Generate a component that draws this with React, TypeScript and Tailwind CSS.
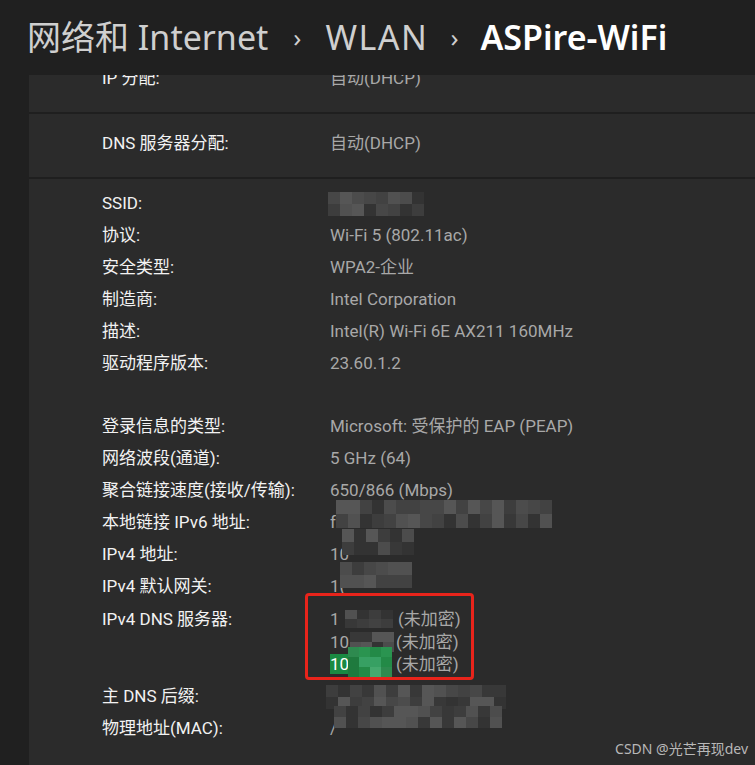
import React from "react";

const FONT = "font-['Noto_Sans','Noto_Sans_CJK_SC',sans-serif]";
const BODY = "font-['Roboto','Noto_Sans_CJK_SC',sans-serif]";

function rnd(seed: number) {
  const x = Math.sin(seed * 12.9898 + 78.233) * 43758.5453;
  return x - Math.floor(x);
}

const GREYS = ["#333333", "#383838", "#3d3d3d", "#424242", "#474747", "#4c4c4c", "#515151", "#565656"];
const GREENS = ["#1f7a3e", "#238a47", "#2a9450", "#37a063", "#45a96e", "#2e8a4f"];

function Mosaic({
  x,
  y,
  cols,
  rows,
  bw = 12,
  bh = 12,
  seed = 1,
  green = false,
}: {
  x: number;
  y: number;
  cols: number;
  rows: number;
  bw?: number;
  bh?: number;
  seed?: number;
  green?: boolean;
}) {
  const pal = green ? GREENS : GREYS;
  const cells = [];
  for (let r = 0; r < rows; r++) {
    for (let c = 0; c < cols; c++) {
      const v = rnd(seed * 100 + r * 17 + c);
      cells.push(
        <div
          key={`${r}-${c}`}
          style={{ width: bw, height: bh, background: pal[Math.floor(v * pal.length)] }}
        />
      );
    }
  }
  return (
    <div
      className="absolute flex flex-wrap"
      style={{ left: x, top: y, width: cols * bw, height: rows * bh }}
    >
      {cells}
    </div>
  );
}

function Row({ label, value, children }: { label: string; value?: string; children?: React.ReactNode }) {
  return (
    <div className="flex h-[32px] items-center">
      <div className="w-[228px] shrink-0 text-[#f2f2f2]">{label}</div>
      <div className="relative flex-1 text-[#a8a8a8]">
        {value}
        {children}
      </div>
    </div>
  );
}

export default function App() {
  return (
    <div className={`relative w-[755px] h-[765px] overflow-hidden bg-[#202020] ${FONT}`}>
      {/* Header breadcrumb */}
      <div className="h-[75px] flex items-center pl-[27px] text-[34px] leading-none pb-[2px]">
        <span className="text-[#cfcfcf]">网络和 Internet</span>
        <span className="text-[#cfcfcf] text-[26px] ml-[25px] mr-[24px]">›</span>
        <span className="text-[#cfcfcf] tracking-[1.5px]">WLAN</span>
        <span className="text-[#cfcfcf] text-[26px] ml-[22px] mr-[22px]">›</span>
        <span className="text-white font-semibold">ASPire-WiFi</span>
      </div>

      {/* Panel */}
      <div className={`ml-[29px] h-[690px] bg-[#2b2b2b] overflow-hidden text-[17px] ${BODY}`}>
        <div className="-mt-[29px]">
          <div className="flex h-[66px] items-center pl-[73px]">
            <div className="w-[228px] text-[#f2f2f2]">IP 分配:</div>
            <div className="text-[#a8a8a8]">自动(DHCP)</div>
          </div>
          <div className="h-[2px] bg-[#1f1f1f]" />
          <div className="flex h-[63px] items-center pl-[73px] pb-[4px]">
            <div className="w-[228px] text-[#f2f2f2]">DNS 服务器分配:</div>
            <div className="text-[#a8a8a8]">自动(DHCP)</div>
          </div>
          <div className="h-[2px] bg-[#1f1f1f]" />

          <div className="pl-[73px] pt-[9px]">
            <Row label="SSID:">
              <Mosaic x={-2} y={-12} cols={8} rows={2} bw={12} bh={12} seed={3} />
            </Row>
            <Row label="协议:" value="Wi-Fi 5 (802.11ac)" />
            <Row label="安全类型:" value="WPA2-企业" />
            <Row label="制造商:" value="Intel Corporation" />
            <Row label="描述:" value="Intel(R) Wi-Fi 6E AX211 160MHz" />
            <Row label="驱动程序版本:" value="23.60.1.2" />
            <div className="h-[31px]" />
            <Row label="登录信息的类型:" value="Microsoft: 受保护的 EAP (PEAP)" />
            <Row label="网络波段(通道):" value="5 GHz (64)" />
            <Row label="聚合链接速度(接收/传输):" value="650/866 (Mbps)" />
            <Row label="本地链接 IPv6 地址:" value="f">
              <Mosaic x={6} y={-10} cols={18} rows={2} bw={12} bh={14} seed={7} />
            </Row>
            <Row label="IPv4 地址:" value="10">
              <Mosaic x={12} y={-13} cols={6} rows={2} bw={12} bh={13} seed={11} />
            </Row>
            <Row label="IPv4 默认网关:" value="1(">
              <Mosaic x={10} y={-12} cols={6} rows={2} bw={12} bh={13} seed={13} />
            </Row>

            {/* DNS servers */}
            <div className="flex h-[78px]">
              <div className="w-[228px] shrink-0 text-[#f2f2f2] leading-[32px]">IPv4 DNS 服务器:</div>
              <div className="relative flex-1 text-[#a8a8a8] pt-[5px] leading-[22.5px]">
                <div className="relative flex">
                  <span className="w-[68px]">1</span>
                  <span>(未加密)</span>
                  <Mosaic x={15} y={2} cols={4} rows={2} bw={12} bh={9} seed={17} />
                </div>
                <div className="relative flex">
                  <span className="w-[66px]">10.</span>
                  <span>(未加密)</span>
                  <Mosaic x={20} y={1} cols={4} rows={2} bw={11} bh={10} seed={19} />
                </div>
                <div className="relative flex">
                  <span className="w-[66px]">
                    <span className="bg-[#1a8a42] text-white pr-[3px]">10.</span>
                  </span>
                  <span>(未加密)</span>
                  <Mosaic x={18} y={-6} cols={4} rows={3} bw={11} bh={10} seed={23} green />
                </div>
              </div>
            </div>

            <Row label="主 DNS 后缀:">
              <Mosaic x={-4} y={-12} cols={15} rows={2} bw={12} bh={12} seed={29} />
            </Row>
            <Row label="物理地址(MAC):" value="/">
              <Mosaic x={4} y={-10} cols={14} rows={2} bw={12} bh={11} seed={31} />
            </Row>
          </div>
        </div>
      </div>

      {/* Red highlight box */}
      <div className="absolute left-[305px] top-[593px] w-[169px] h-[87px] border-[3px] border-[#e8241b] rounded-[4px]" />

      {/* Watermark */}
      <div className="absolute right-[7px] bottom-[6px] text-[14px] text-[#b8b8b8]">CSDN @光芒再现dev</div>
    </div>
  );
}
